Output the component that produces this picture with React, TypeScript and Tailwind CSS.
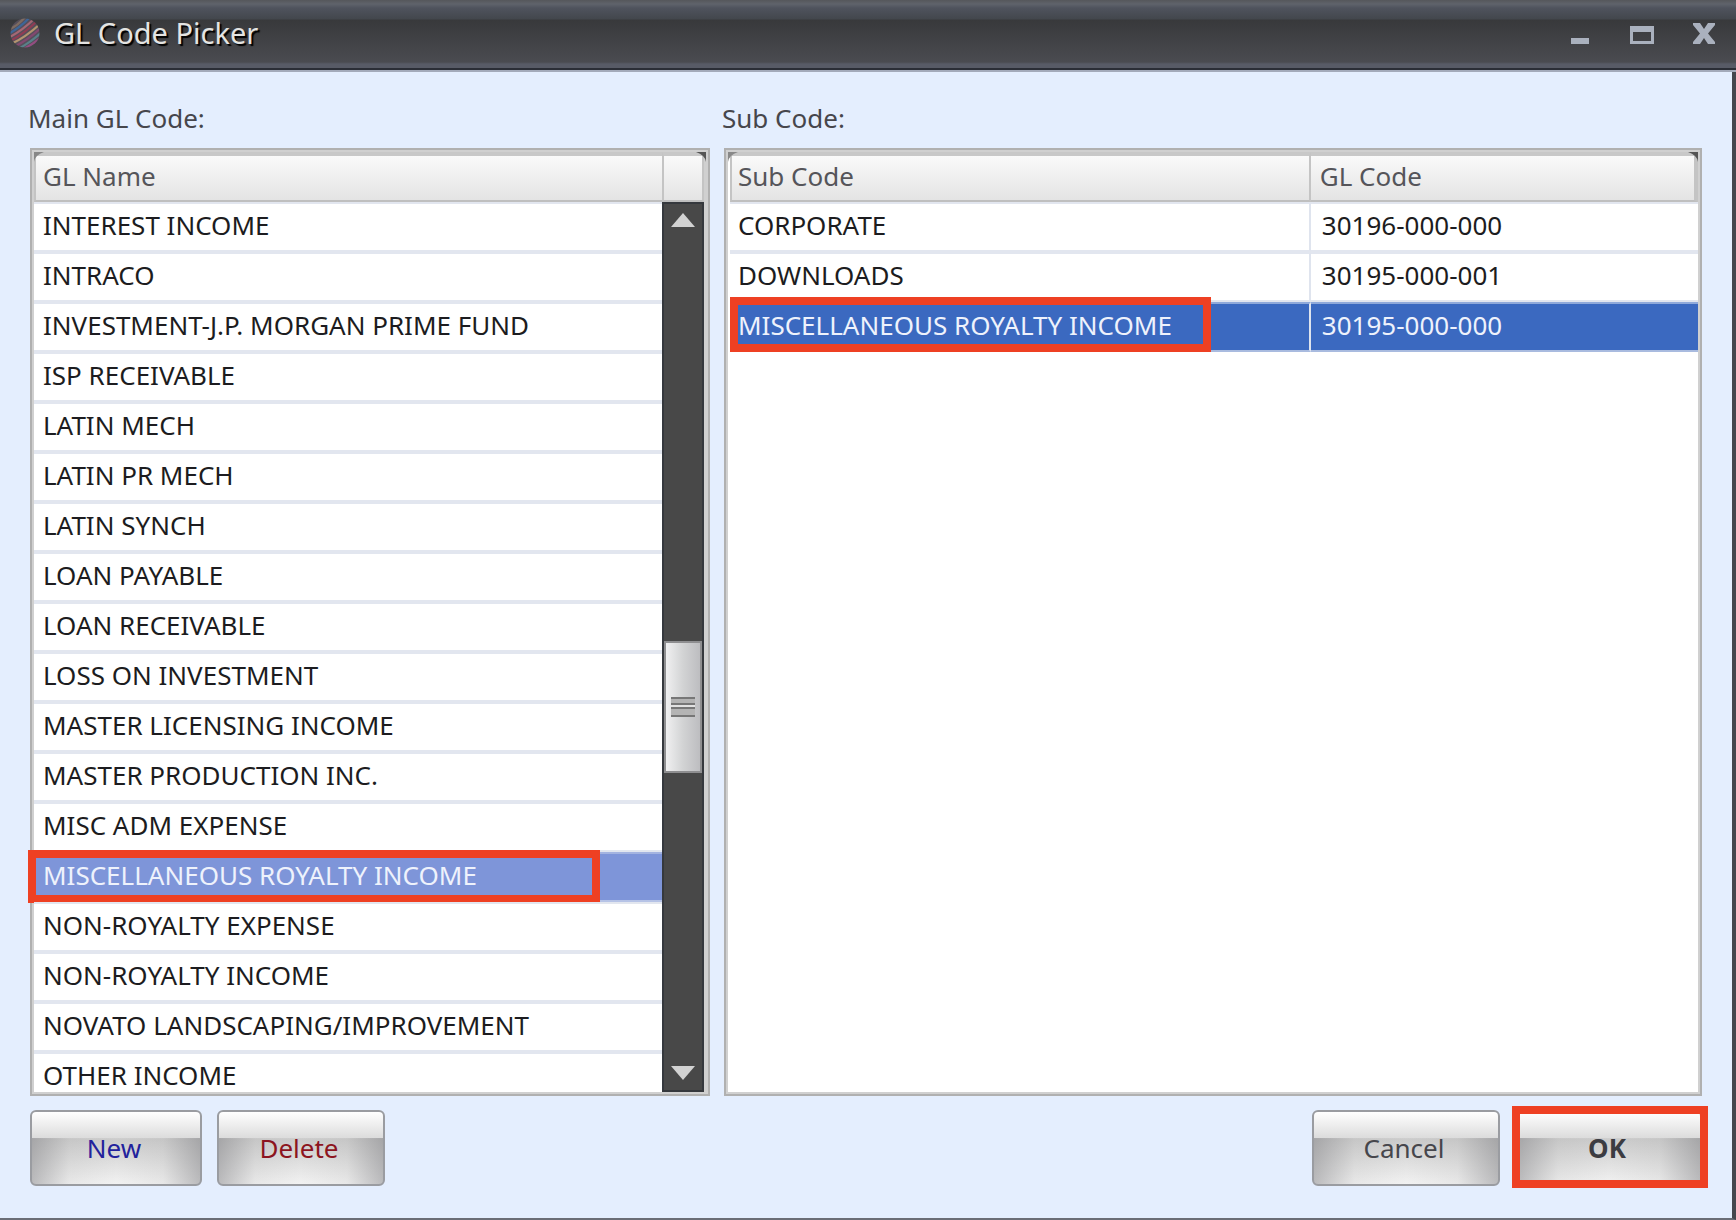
import { useState } from 'react';
import clsx from 'clsx';

interface SubCode { name: string; code: string; }

const GL_NAMES = [
  'INTEREST INCOME',
  'INTRACO',
  'INVESTMENT-J.P. MORGAN PRIME FUND',
  'ISP RECEIVABLE',
  'LATIN MECH',
  'LATIN PR MECH',
  'LATIN SYNCH',
  'LOAN PAYABLE',
  'LOAN RECEIVABLE',
  'LOSS ON INVESTMENT',
  'MASTER LICENSING INCOME',
  'MASTER PRODUCTION INC.',
  'MISC ADM EXPENSE',
  'MISCELLANEOUS ROYALTY INCOME',
  'NON-ROYALTY EXPENSE',
  'NON-ROYALTY INCOME',
  'NOVATO LANDSCAPING/IMPROVEMENT',
  'OTHER INCOME',
];

const SUB_CODES: SubCode[] = [
  { name: 'CORPORATE', code: '30196-000-000' },
  { name: 'DOWNLOADS', code: '30195-000-001' },
  { name: 'MISCELLANEOUS ROYALTY INCOME', code: '30195-000-000' },
];

const headClass = 'h-[50px] border-t-4 border-b-2 border-t-[#c8c8c8] border-b-[#bfbfbf] bg-linear-to-b from-[#fafafa] to-[#e4e4e4] p-0 pb-1 text-left font-normal text-[#55555a]';
const cellClass = 'relative h-[50px] border-y-2 p-0 pb-1';
const plainClass = 'border-y-[#e2e6ef] bg-white text-[#1c1c20]';
const buttonClass = 'relative h-[76px] rounded-md border-2 border-[#9a9ca1] bg-[linear-gradient(90deg,rgba(120,120,124,0.45),rgba(160,160,160,0.12)_22%,rgba(255,255,255,0)_50%,rgba(160,160,160,0.12)_78%,rgba(120,120,124,0.45)),linear-gradient(180deg,#ffffff_0%,#dcdcdc_36%,#cbcbcb_37%,#f2f2f2_100%)] bg-[position:0_26px,0_0] bg-no-repeat pr-1';

function Highlight({ className }: { className: string }) {
  return <span className={clsx('pointer-events-none absolute border-8 border-[#ee4023]', className)} />;
}

function Corner({ right = false }: { right?: boolean }) {
  return (
    <svg viewBox="0 0 10 10" className={clsx('absolute top-0.5 size-[10px]', right ? 'right-0.5' : 'left-0.5')} aria-hidden="true">
      <path d={right ? 'M0 0H10V10Q9 3 0 0Z' : 'M10 0H0V10Q1 3 10 0Z'} fill={right ? '#555' : '#888'} />
    </svg>
  );
}

function Logo() {
  return (
    <svg viewBox="0 0 30 30" className="size-[30px]" aria-hidden="true">
      <defs>
        <clipPath id="ball"><circle cx="15" cy="15" r="14.5" /></clipPath>
      </defs>
      <g clipPath="url(#ball)" fill="none" strokeWidth="2.2" opacity="0.85">
        <rect width="30" height="30" fill="#5b5360" />
        <path d="M-2 12Q8 8 17-3" stroke="#8a7568" />
        <path d="M-2 16Q10 10 21-2" stroke="#3f6fa8" />
        <path d="M-2 20Q12 13 25 0" stroke="#b9707e" />
        <path d="M0 23Q14 16 28 2" stroke="#a03d58" />
        <path d="M1 26Q16 19 30 6" stroke="#c9a478" />
        <path d="M4 29Q18 22 32 9" stroke="#8f4a78" />
        <path d="M8 31Q20 25 33 13" stroke="#5d8c96" />
        <path d="M12 32Q22 27 33 18" stroke="#a34f8c" />
      </g>
    </svg>
  );
}

function TitleBar() {
  return (
    <header className="flex h-[72px] items-center justify-between border-b-2 border-[#a3aaba] bg-[linear-gradient(180deg,#55575b_0px,#5f636b_4px,#4f535d_8px,#43474d_19px,#38393b_20px,#4a4b50_62px,#585b66_64px,#585b66_68px,#2b2e36_68px,#2b2e36_70px)] pr-5 pl-[10px]">
      <div className="flex items-center gap-[14px] pb-1">
        <Logo />
        <h1 className="text-[29px] leading-9 text-[#e4e4e2] [text-shadow:2px_2px_1px_#000]">GL Code Picker</h1>
      </div>
      <div className="flex items-center gap-[38px] pb-1 text-[#aab1be]">
        <button aria-label="Minimize" className="size-6">
          <svg viewBox="0 0 24 24"><path d="M3 17H21V23H3Z" fill="currentColor" /></svg>
        </button>
        <button aria-label="Maximize" className="size-6">
          <svg viewBox="0 0 24 24"><path d="M0 5H24V23H0ZM3 11V20H21V11Z" fill="currentColor" fillRule="evenodd" /></svg>
        </button>
        <button aria-label="Close" className="size-6">
          <svg viewBox="0 0 24 24"><path d="M1 2H8L12 8L16 2H23V4L16 12.500L23 21V23H16L12 17L8 23H1V21L8 12.500L1 4Z" fill="currentColor" /></svg>
        </button>
      </div>
    </header>
  );
}

function ScrollBar() {
  return (
    <div className="flex w-[42px] flex-col items-center border-2 border-[#35383d] bg-[#484848]">
      <button aria-label="Scroll up" className="flex h-9 items-start pt-[9px]">
        <svg viewBox="0 0 24 14" className="h-[14px] w-6"><path d="M12 0L24 14H0Z" fill="#d2d2d2" /></svg>
      </button>
      <div className="flex w-full flex-1 flex-col items-center">
        <div className="grow-[400]" />
        <div className="flex h-[132px] w-full flex-col items-center justify-center border-2 border-[#8e8e90] bg-linear-to-r from-[#f0f0f1] via-[#d2d3d4] to-[#bdbdc0]">
          <div className="h-5 w-6 border-y-2 border-[#777] bg-[linear-gradient(180deg,#b4b4b4_4px,#777_4px,#777_6px,#e2e2e2_6px,#e2e2e2_8px,#777_8px,#777_10px,#b4b4b4_10px)]" />
        </div>
        <div className="grow-[280]" />
      </div>
      <button aria-label="Scroll down" className="flex h-9 items-end pb-[10px]">
        <svg viewBox="0 0 24 14" className="h-[14px] w-6"><path d="M0 0H24L12 14Z" fill="#d2d2d2" /></svg>
      </button>
    </div>
  );
}

export default function App() {
  const [glName, setGlName] = useState('MISCELLANEOUS ROYALTY INCOME');
  const [subCode, setSubCode] = useState('30195-000-000');

  return (
    <div className="flex h-screen flex-col bg-[#e4eefe] font-['Noto_Sans',sans-serif] text-[26px] leading-8 text-[#46464c]">
      <TitleBar />
      <main className="flex min-h-0 flex-1 flex-col border-r-4 border-b-2 border-r-[#45474d] border-b-[#6a6d76] px-7 pt-[30px] pb-8">
        <div className="grid min-h-0 flex-1 grid-cols-[682fr_980fr] gap-3 pr-0.5">
          <section className="flex min-h-0 flex-col gap-[14px]">
            <h2 id="main-label">Main GL Code:</h2>
            <div className="relative ml-0.5 flex min-h-0 flex-1 border-2 border-[#b0b0b0] bg-[#d0d0d0] p-0.5 pr-1">
              <div className="min-w-0 flex-1 overflow-y-clip bg-white">
                <table aria-labelledby="main-label" className="w-full border-separate border-spacing-0">
                  <thead>
                    <tr><th className={clsx(headClass, 'border-l-2 border-l-[#c4c4c4] pl-[7px]')}>GL Name</th></tr>
                  </thead>
                  <tbody>
                    {GL_NAMES.map(name => (
                      <tr key={name} onClick={() => setGlName(name)}>
                        <td className={clsx(cellClass, 'pl-[9px]', name === glName ? 'border-t-[#a3b3e0] border-b-[#b6c3e6] bg-[#7e95d9] text-[#eef2fc]' : plainClass)}>
                          {name}
                          {name === glName && <Highlight className="-top-1 right-[62px] -bottom-[3px] -left-[6px]" />}
                        </td>
                      </tr>
                    ))}
                  </tbody>
                </table>
              </div>
              <div className="flex w-[42px] flex-col">
                <div className={clsx(headClass, 'border-x-2 border-x-[#c4c4c4]')} />
                <div className="flex flex-1"><ScrollBar /></div>
              </div>
              <Corner />
              <Corner right />
            </div>
          </section>

          <section className="flex min-h-0 flex-col gap-[14px]">
            <h2 id="sub-label">Sub Code:</h2>
            <div className="relative ml-0.5 min-h-0 flex-1 border-2 border-[#b0b0b0] bg-[#d0d0d0] p-0.5">
              <div className="h-full bg-white pl-0.5">
                <table aria-labelledby="sub-label" className="w-full table-fixed border-separate border-spacing-0">
                  <thead>
                    <tr>
                      <th className={clsx(headClass, 'w-[60%] border-x-2 border-x-[#c4c4c4] pl-[6px]')}>Sub Code</th>
                      <th className={clsx(headClass, 'border-r-4 border-r-[#c4c4c4] pl-[9px]')}>GL Code</th>
                    </tr>
                  </thead>
                  <tbody>
                    {SUB_CODES.map(row => {
                      const rowClass = row.code === subCode ? 'border-t-[#8fa9da] border-b-[#a9bbdf] bg-[#3b69c0] text-[#eef2fc]' : plainClass;
                      return (
                        <tr key={row.code} onClick={() => setSubCode(row.code)}>
                          <td className={clsx(cellClass, rowClass, 'border-r-2 border-r-[#dfe4ee] pl-2')}>
                            {row.name}
                            {row.code === subCode && <Highlight className="right-[98px] -top-[7px] -bottom-0.5 left-0" />}
                          </td>
                          <td className={clsx(cellClass, rowClass, 'pl-[11px]')}>{row.code}</td>
                        </tr>
                      );
                    })}
                  </tbody>
                </table>
              </div>
              <Corner />
              <Corner right />
            </div>
          </section>
        </div>

        <footer className="flex justify-between pt-[14px] pr-0.5 pl-0.5">
          <div className="flex gap-[15px]">
            <button className={clsx(buttonClass, 'w-[172px] text-[#22229c]')}>New</button>
            <button className={clsx(buttonClass, 'w-[168px] text-[#8c1420]')}>Delete</button>
          </div>
          <div className="flex gap-4">
            <button className={clsx(buttonClass, 'w-[188px]')}>Cancel</button>
            <button className={clsx(buttonClass, 'w-[186px] font-bold text-[#3c3c42]')}>
              OK
              <Highlight className="-top-[6px] -right-2 -bottom-1 -left-[6px]" />
            </button>
          </div>
        </footer>
      </main>
    </div>
  );
}
